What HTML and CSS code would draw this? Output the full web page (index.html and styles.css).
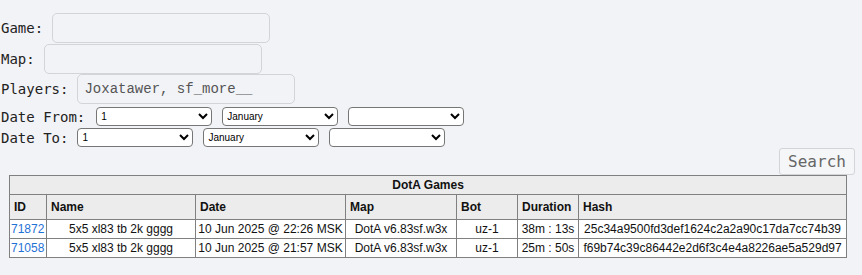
FILE: index.html
```html
<!DOCTYPE html>
<html lang="en">
<head>
    <meta charset="UTF-8">
    <meta name="viewport" content="width=device-width, initial-scale=1.0">
    <title>DotA Games</title>
    <link rel="stylesheet" href="styles.css">
</head>
<body>

<form class="search-form">
    <div class="form-row row-game">
        <label for="game">Game:</label>
        <input type="text" id="game" class="text-field field-game">
    </div>
    <div class="form-row row-map">
        <label for="map">Map:</label>
        <input type="text" id="map" class="text-field field-map">
    </div>
    <div class="form-row row-players">
        <label for="players">Players:</label>
        <input type="text" id="players" class="text-field field-players" value="Joxatawer, sf_more__">
    </div>
    <div class="date-row row-from">
        <label>Date From:</label>
        <select class="date-select"><option>1</option></select>
        <select class="date-select"><option>January</option></select>
        <select class="date-select"><option></option></select>
    </div>
    <div class="date-row row-to">
        <label>Date To:</label>
        <select class="date-select"><option>1</option></select>
        <select class="date-select"><option>January</option></select>
        <select class="date-select"><option></option></select>
    </div>
    <div class="submit-row">
        <button type="button" class="search-btn">Search</button>
    </div>
</form>

<table class="games">
    <colgroup>
        <col style="width: 37px">
        <col style="width: 149px">
        <col style="width: 150px">
        <col style="width: 111px">
        <col style="width: 61px">
        <col style="width: 61px">
        <col style="width: 268px">
    </colgroup>
    <tr>
        <th colspan="7" class="caption">DotA Games</th>
    </tr>
    <tr class="head">
        <th>ID</th>
        <th>Name</th>
        <th>Date</th>
        <th>Map</th>
        <th>Bot</th>
        <th>Duration</th>
        <th>Hash</th>
    </tr>
    <tr>
        <td class="id"><a href="#">71872</a></td>
        <td>5x5 xl83 tb 2k gggg</td>
        <td>10 Jun 2025 @ 22:26 MSK</td>
        <td>DotA v6.83sf.w3x</td>
        <td>uz-1</td>
        <td>38m : 13s</td>
        <td>25c34a9500fd3def1624c2a2a90c17da7cc74b39</td>
    </tr>
    <tr>
        <td class="id"><a href="#">71058</a></td>
        <td>5x5 xl83 tb 2k gggg</td>
        <td>10 Jun 2025 @ 21:57 MSK</td>
        <td>DotA v6.83sf.w3x</td>
        <td>uz-1</td>
        <td>25m : 50s</td>
        <td>f69b74c39c86442e2d6f3c4e4a8226ae5a529d97</td>
    </tr>
</table>

</body>
</html>
```

FILE: styles.css
```css
body {
    margin: 0;
    padding: 0 1px;
    background-color: #f2f3f7;
    font-family: "DejaVu Sans Mono", monospace;
    font-size: 14px;
    color: #222;
}
.search-form {
    padding-top: 13px;
}
.form-row {
    display: flex;
    align-items: center;
    height: 30px;
    margin-bottom: 1px;
}
.form-row label {
    margin-right: 9px;
}
.row-players {
    margin-top: -1px;
}
.text-field {
    box-sizing: border-box;
    width: 218px;
    height: 30px;
    padding: 4px 6px;
    border: 1px solid #d3d4d8;
    border-radius: 5px;
    background-color: #f2f3f7;
    font-family: "Liberation Mono", monospace;
    font-size: 14px;
    line-height: 20px;
    color: #555;
}
.date-row {
    display: flex;
    align-items: center;
    height: 21px;
}
.row-from {
    margin-top: 2px;
}
.row-from label {
    margin-right: 11px;
}
.row-to label {
    margin-right: 9px;
}
.date-select {
    box-sizing: border-box;
    width: 116px;
    height: 19px;
    margin: 0 10px 0 0;
    font-family: "Liberation Sans", Arial, sans-serif;
    font-size: 10px;
    background-color: #fff;
    border: 1px solid #767676;
    border-radius: 4px;
}
.submit-row {
    display: flex;
    justify-content: flex-end;
    padding-right: 6px;
}
.search-btn {
    box-sizing: border-box;
    width: 76px;
    height: 27px;
    padding: 0;
    border: 1px solid #d3d4d8;
    border-radius: 3px;
    background-color: #f5f6f8;
    font-family: "DejaVu Sans Mono", monospace;
    font-size: 16px;
    color: #666;
    cursor: pointer;
}
.games {
    margin-left: 8px;
    width: 838px;
    table-layout: fixed;
    border-collapse: collapse;
    background-color: #fff;
    font-family: "Liberation Sans", Arial, sans-serif;
    font-size: 12px;
    color: #111;
}
.games th,
.games td {
    border: 1px solid #808080;
    white-space: nowrap;
    overflow: hidden;
}
.games th {
    background-color: #ececec;
    text-align: left;
    padding: 5px 4px;
    font-weight: bold;
}
.games th.caption {
    text-align: center;
    padding: 2px 4px;
}
.games td {
    padding: 1px 1px;
    height: 16px;
    text-align: center;
}
.games td.id {
    text-align: left;
}
.games a {
    color: #1f72d6;
    text-decoration: none;
}
```
